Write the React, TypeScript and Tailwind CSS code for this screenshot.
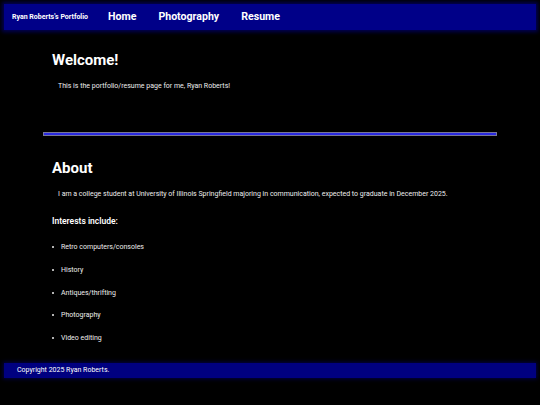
import React from 'react';

const interests = [
  'Retro computers/consoles',
  'History',
  'Antiques/thrifting',
  'Photography',
  'Video editing',
];

const navLinks = ['Home', 'Photography', 'Resume'];

const App: React.FC = () => {
  return (
    <div className="min-h-[405px] bg-black text-white pt-[4px] pb-[30px]" style={{ fontFamily: 'Roboto, "Noto Sans", sans-serif' }}>
      {/* Header */}
      <header className="mx-[4px] h-[26px] bg-[#000088] flex items-center shadow-[0_0_4px_2px_rgba(0,0,140,0.6)]">
        <span className="pl-[8px] pr-[20px] text-[7px] font-bold leading-none whitespace-nowrap">Ryan Roberts's Portfolio</span>
        <nav className="flex items-center gap-[22px]">
          {navLinks.map((l) => (
            <a key={l} className="text-[10.6px] font-bold leading-none">{l}</a>
          ))}
        </nav>
      </header>

      {/* Welcome */}
      <section className="px-[52px] pt-[21px]">
        <h1 className="text-[15px] font-bold leading-[18px]">Welcome!</h1>
        <p className="mt-[12px] pl-[6px] text-[7px] leading-[10px] text-[#eeeeee]">
          This is the portfolio/resume page for me, Ryan Roberts!
        </p>
      </section>

      <hr className="mx-[43px] mt-[41px] h-[4px] bg-[#2a2ae0] border border-[#777799]" />

      {/* About */}
      <section className="px-[52px] pt-[23px]">
        <h2 className="text-[15px] font-bold leading-[18px]">About</h2>
        <p className="mt-[12px] pl-[6px] text-[7px] leading-[10px] text-[#eeeeee]">
          I am a college student at University of Illinois Springfield majoring in communication, expected to graduate in December 2025.
        </p>
        <h3 className="mt-[16px] text-[8.5px] font-semibold leading-[12px]">Interests include:</h3>
        <ul className="mt-[15px] list-disc list-inside pl-0 marker:text-[6px] text-[7px] leading-[10px] text-[#eeeeee] flex flex-col gap-[12.8px]">
          {interests.map((i) => (
            <li key={i}>{i}</li>
          ))}
        </ul>
      </section>

      {/* Footer */}
      <footer className="mx-[4px] mt-[20px] h-[15px] bg-[#000080] flex items-center pl-[13px] text-[7px] leading-none shadow-[0_0_4px_1px_rgba(0,0,140,0.5)]">
        Copyright 2025 Ryan Roberts.
      </footer>
    </div>
  );
};

export default App;
